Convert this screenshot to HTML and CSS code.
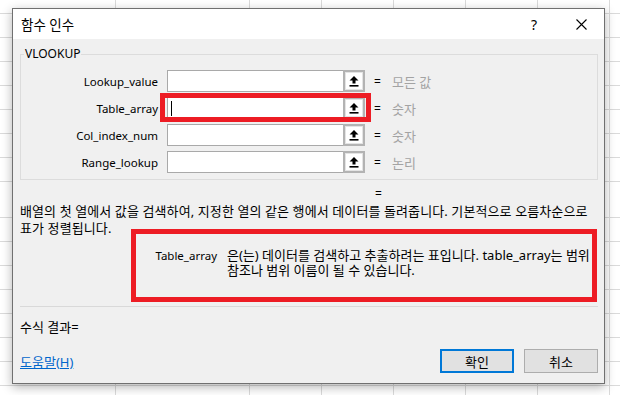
FILE: index.html
```html
<!DOCTYPE html>
<html lang="ko">
<head>
  <meta charset="UTF-8">
  <meta name="viewport" content="width=device-width, initial-scale=1.0">
  <title>함수 인수</title>
  <link rel="stylesheet" href="styles.css">
</head>
<body>
  <div class="dialog">
    <div class="titlebar">
      <span class="title">함수 인수</span>
      <span class="help">?</span>
      <span class="close">
        <svg width="11" height="11" viewBox="0 0 11 11"><path d="M0.5 0.5 L10.5 10.5 M10.5 0.5 L0.5 10.5" stroke="#000" stroke-width="1.1" fill="none"/></svg>
      </span>
    </div>

    <div class="content">
      <fieldset class="group">
        <legend>VLOOKUP</legend>
        <div class="args">
          <label>Lookup_value</label>
          <div class="field">
            <div class="box"></div>
            <span class="pick"><svg width="10" height="11" viewBox="0 0 10 11"><path d="M5 0 L9.5 4.5 H6.5 V7.5 H3.5 V4.5 H0.5 Z" fill="#000"/><rect x="0.5" y="9" width="9" height="1.6" fill="#000"/></svg></span>
          </div>
          <span class="eq">=</span>
          <span class="val">모든 값</span>

          <label>Table_array</label>
          <div class="field">
            <div class="box"><span class="caret"></span></div>
            <span class="pick"><svg width="10" height="11" viewBox="0 0 10 11"><path d="M5 0 L9.5 4.5 H6.5 V7.5 H3.5 V4.5 H0.5 Z" fill="#000"/><rect x="0.5" y="9" width="9" height="1.6" fill="#000"/></svg></span>
            <div class="mark mark-field"></div>
          </div>
          <span class="eq">=</span>
          <span class="val">숫자</span>

          <label>Col_index_num</label>
          <div class="field">
            <div class="box"></div>
            <span class="pick"><svg width="10" height="11" viewBox="0 0 10 11"><path d="M5 0 L9.5 4.5 H6.5 V7.5 H3.5 V4.5 H0.5 Z" fill="#000"/><rect x="0.5" y="9" width="9" height="1.6" fill="#000"/></svg></span>
          </div>
          <span class="eq">=</span>
          <span class="val">숫자</span>

          <label>Range_lookup</label>
          <div class="field">
            <div class="box"></div>
            <span class="pick"><svg width="10" height="11" viewBox="0 0 10 11"><path d="M5 0 L9.5 4.5 H6.5 V7.5 H3.5 V4.5 H0.5 Z" fill="#000"/><rect x="0.5" y="9" width="9" height="1.6" fill="#000"/></svg></span>
          </div>
          <span class="eq">=</span>
          <span class="val">논리</span>
        </div>
      </fieldset>

      <div class="result-eq">=</div>
      <p class="func-desc">배열의 첫 열에서 값을 검색하여, 지정한 열의 같은 행에서 데이터를 돌려줍니다. 기본적으로 오름차순으로 표가 정렬됩니다.</p>

      <div class="arg-help">
        <span class="arg-name">Table_array</span>
        <span class="arg-text">은(는) 데이터를 검색하고 추출하려는 표입니다. table_array는 범위 참조나 범위 이름이 될 수 있습니다.</span>
        <div class="mark mark-help"></div>
      </div>

      <div class="sep"></div>

      <div class="formula">수식 결과=</div>

      <div class="footer">
        <a href="#" class="help-link">도움말(H)</a>
        <div class="buttons">
          <button class="btn btn-ok">확인</button>
          <button class="btn">취소</button>
        </div>
      </div>
    </div>
  </div>
</body>
</html>
```

FILE: styles.css
```css
* {
  box-sizing: border-box;
}
body {
  margin: 0;
  width: 620px;
  height: 395px;
  overflow: hidden;
  font-family: "Noto Sans", "Noto Sans CJK KR", sans-serif;
  font-size: 13px;
  color: #000;
  background-color: #fff;
  background-image:
    linear-gradient(to right, transparent 115px, #dadada 115px 116px, transparent 116px 249px, #dadada 249px 250px, transparent 250px 321px, #dadada 321px 322px, transparent 322px 393px, #dadada 393px 394px, transparent 394px 465px, #dadada 465px 466px, transparent 466px 537px, #dadada 537px 538px, transparent 538px 609px, #dadada 609px 610px, transparent 610px),
    repeating-linear-gradient(to bottom, transparent 0 13px, #dadada 13px 14px, transparent 14px 24px),
    repeating-linear-gradient(to bottom, transparent 0 17px, #dadada 17px 18px, transparent 18px 24px);
  background-size: 100% 100%, 100% 200px, 100% 195px;
  background-position: 0 0, 0 0, 0 200px;
  background-repeat: no-repeat;
}
.dialog {
  margin: 8px 0 0 12px;
  width: 593px;
  height: 376px;
  border: 1px solid #707070;
  background-color: #f0f0f0;
  box-shadow: 0 3px 10px rgba(0, 0, 0, 0.3);
  display: flex;
  flex-direction: column;
}
.titlebar {
  height: 30px;
  background-color: #fff;
  display: flex;
  align-items: center;
  padding: 0 17px 0 8px;
}
.title {
  font-size: 13.5px;
}
.help {
  margin-left: auto;
  font-size: 14px;
}
.close {
  display: flex;
  margin-left: 39px;
}
.content {
  padding: 0 6px 0 7px;
}
.group {
  margin: 8px 0 0;
  padding: 9px 0 6px;
  border: 1px solid #dcdcdc;
  min-width: 0;
}
.group legend {
  margin-left: 3px;
  padding: 0 1px;
  font-size: 12px;
  line-height: 14px;
}
.args {
  display: grid;
  grid-template-columns: 137px 198px 9px auto;
  grid-auto-rows: 22px;
  row-gap: 5px;
  column-gap: 9px;
  align-items: center;
}
.args label {
  text-align: right;
  font-size: 11.5px;
}
.eq {
  font-size: 12px;
}
.field {
  position: relative;
  display: flex;
  height: 22px;
}
.box {
  flex: 1;
  background-color: #fff;
  border: 1px solid #a9a9a9;
  border-right: none;
  display: flex;
  align-items: center;
}
.caret {
  width: 1px;
  height: 15px;
  margin-left: 3px;
  background-color: #000;
}
.pick {
  width: 22px;
  height: 22px;
  border: 2px solid #b3b3b3;
  background-color: #fff;
  box-shadow: inset 0 0 0 1px #e4e4e4;
  display: flex;
  align-items: center;
  justify-content: center;
}
.val {
  color: #a3a3a3;
}
.mark {
  position: absolute;
  border: 5px solid #ed1c24;
}
.mark-field {
  left: -7px;
  top: -4px;
  width: 211px;
  height: 29px;
}
.result-eq {
  height: 13px;
  margin-top: 7px;
  padding-left: 355px;
  font-size: 12px;
  line-height: 13px;
}
.func-desc {
  margin: 3px 0 0;
  line-height: 17px;
  letter-spacing: 0.1px;
}
.arg-help {
  position: relative;
  display: flex;
  height: 61px;
  margin-top: 4px;
  padding-top: 7px;
  line-height: 15px;
}
.arg-name {
  width: 197px;
  text-align: right;
  margin-right: 10px;
  font-size: 11.5px;
}
.arg-text {
  width: 370px;
}
.mark-help {
  left: 111px;
  top: -12px;
  width: 466px;
  height: 73px;
}
.sep {
  height: 1px;
  margin-top: 4px;
  background-color: #d9d9d9;
}
.formula {
  margin-top: 13px;
  line-height: 15px;
}
.footer {
  display: flex;
  align-items: center;
  justify-content: space-between;
  margin-top: 14px;
}
.help-link {
  color: #0066cc;
}
.buttons {
  display: flex;
  gap: 10px;
}
.btn {
  width: 74px;
  height: 24px;
  padding: 0;
  font-family: inherit;
  font-size: 13px;
  color: #000;
  background-color: #e1e1e1;
  border: 1px solid #adadad;
}
.btn-ok {
  border: 2px solid #0078d7;
}
```
